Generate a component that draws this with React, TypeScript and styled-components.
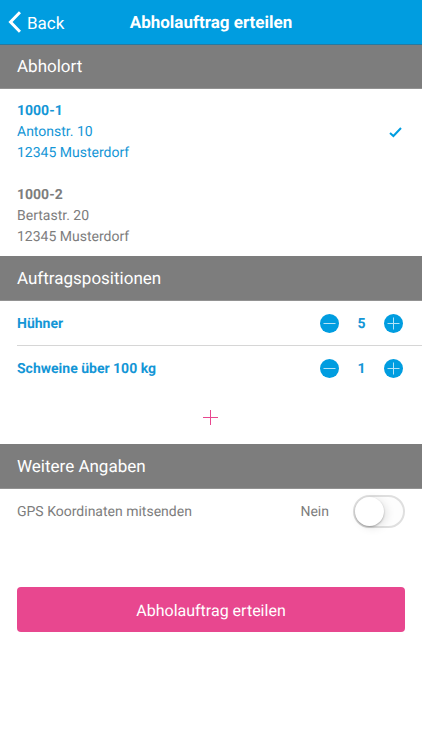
import React, { useState } from "react";
import styled, { createGlobalStyle } from "styled-components";

const blue = "#009de0";
const textBlue = "#1496d6";
const grey = "#7d7d7d";
const pink = "#e8478f";

const GlobalStyle = createGlobalStyle`
  *, *::before, *::after { box-sizing: border-box; }
  body {
    margin: 0;
    background: #fff;
    color: ${grey};
    font-family: Roboto, "Liberation Sans", sans-serif;
    font-size: 14px;
    line-height: 21px;
    text-rendering: geometricPrecision;
  }
  button { font: inherit; border: 0; padding: 0; cursor: pointer; text-rendering: inherit; }
`;

const Header = styled.header`
  display: grid;
  grid-template-columns: 1fr auto 1fr;
  align-items: center;
  height: 45px;
  margin-bottom: -1px;
  padding: 0 8px;
  background: ${blue};
  border-bottom: 1px solid #2679a0;
  color: #fff;
  position: relative;
`;

const BackButton = styled.button`
  display: flex;
  align-items: center;
  gap: 6px;
  justify-self: start;
  background: none;
  color: #fff;
  font-size: 17px;
  span { padding-top: 4px; }
`;

const Title = styled.h1`
  margin: 0;
  padding-top: 2px;
  font-size: 17px;
  font-weight: 700;
`;

const SectionTitle = styled.h2`
  display: flex;
  align-items: center;
  height: 45px;
  margin: 0;
  padding: 2px 17px 0;
  background: ${grey};
  border-bottom: 1px solid #929292;
  color: #fff;
  font-size: 17px;
  font-weight: 400;
`;

const Locations = styled.div`
  display: grid;
  gap: 1px;
`;

const Location = styled.label<{ $selected: boolean }>`
  display: flex;
  align-items: center;
  justify-content: space-between;
  padding: 12px 17px 8px;
  color: ${(p) => (p.$selected ? textBlue : grey)};
  cursor: pointer;
  position: relative;
`;

const HiddenInput = styled.input`
  position: absolute;
  inset: 0;
  width: 100%;
  height: 100%;
  margin: 0;
  opacity: 0;
  cursor: pointer;
`;

const Address = styled.span`
  display: grid;
`;

const Tick = styled.svg`
  margin-right: 3px;
`;

const Positions = styled.ul`
  margin: 0;
  padding: 0 0 0 17px;
  list-style: none;
`;

const Position = styled.li`
  display: flex;
  align-items: center;
  justify-content: space-between;
  height: 44px;
  padding-right: 19px;
  color: ${textBlue};
  font-weight: 700;
  & + & {
    height: 45px;
    border-top: 1px solid #d6d6d6;
  }
`;

const PositionName = styled.span`
  padding-top: 2px;
`;

const Count = styled.output`
  padding-top: 2px;
`;

const Stepper = styled.div`
  display: grid;
  grid-template-columns: 19px 45px 19px;
  align-items: center;
  text-align: center;
`;

const RoundButton = styled.button`
  display: grid;
  place-items: center;
  width: 19px;
  height: 19px;
  border-radius: 50%;
  background: ${blue};
`;

const AddButton = styled.button`
  display: grid;
  place-items: center;
  width: 100%;
  height: 54px;
  background: none;
`;

const OptionRow = styled.div`
  display: flex;
  align-items: center;
  height: 45px;
  padding: 0 17px;
`;

const OptionLabel = styled.label`
  flex: 1;
  padding-top: 2px;
`;

const OptionValue = styled.span`
  padding-top: 2px;
`;

const Switch = styled.span`
  position: relative;
  display: block;
  width: 52px;
  height: 33px;
  margin-left: 24px;
`;

const Track = styled.span<{ $on: boolean }>`
  display: flex;
  justify-content: ${(p) => (p.$on ? "flex-end" : "flex-start")};
  height: 100%;
  border: 2px solid ${(p) => (p.$on ? blue : "#dfdfdf")};
  border-radius: 17px;
  background: ${(p) => (p.$on ? blue : "#fdfdfd")};
`;

const Knob = styled.span`
  width: 29px;
  height: 29px;
  border-radius: 50%;
  background: #fff;
  box-shadow: 0 1px 2px rgba(0, 0, 0, 0.3), 3px 2px 8px rgba(0, 0, 0, 0.1);
`;

const Footer = styled.div`
  padding: 53px 17px 17px;
`;

const SubmitButton = styled.button`
  width: 100%;
  height: 45px;
  padding-top: 1px;
  border-radius: 4px;
  background: ${pink};
  color: #fff;
  font-size: 16px;
`;

const locations = [
  { id: "1000-1", street: "Antonstr. 10", city: "12345 Musterdorf" },
  { id: "1000-2", street: "Bertastr. 20", city: "12345 Musterdorf" },
];

export default function App() {
  const [selected, setSelected] = useState("1000-1");
  const [gps, setGps] = useState(false);
  const [positions, setPositions] = useState([
    { name: "Hühner", count: 5 },
    { name: "Schweine über 100 kg", count: 1 },
  ]);

  const change = (index: number, by: number) =>
    setPositions((list) =>
      list.map((p, i) => (i === index ? { ...p, count: Math.max(0, p.count + by) } : p))
    );

  return (
    <>
      <GlobalStyle />
      <Header>
        <BackButton type="button">
          <svg width="13" height="22" viewBox="0 0 13 22" fill="none" stroke="#fff" strokeWidth="3" aria-hidden="true">
            <path d="M12 1.2 2.5 11 12 20.8" />
          </svg>
          <span>Back</span>
        </BackButton>
        <Title>Abholauftrag erteilen</Title>
      </Header>
      <main>
        <SectionTitle>Abholort</SectionTitle>
        <Locations role="radiogroup" aria-label="Abholort">
          {locations.map((l) => (
            <Location key={l.id} $selected={l.id === selected}>
              <HiddenInput
                type="radio"
                name="location"
                checked={l.id === selected}
                onChange={() => setSelected(l.id)}
              />
              <Address>
                <strong>{l.id}</strong>
                <span>{l.street}</span>
                <span>{l.city}</span>
              </Address>
              {l.id === selected && (
                <Tick width="13" height="11" viewBox="0 0 13 11" fill="none" stroke={blue} strokeWidth="2" aria-hidden="true">
                  <path d="M1 6 4.4 9 12 1" />
                </Tick>
              )}
            </Location>
          ))}
        </Locations>
        <SectionTitle>Auftragspositionen</SectionTitle>
        <Positions>
          {positions.map((p, i) => (
            <Position key={p.name}>
              <PositionName>{p.name}</PositionName>
              <Stepper>
                <RoundButton type="button" aria-label={`${p.name} verringern`} onClick={() => change(i, -1)}>
                  <svg width="13" height="13" viewBox="0 0 13 13" stroke="#b5e3f7" aria-hidden="true">
                    <path d="M.5 6.5h12" />
                  </svg>
                </RoundButton>
                <Count>{p.count}</Count>
                <RoundButton type="button" aria-label={`${p.name} erhöhen`} onClick={() => change(i, 1)}>
                  <svg width="13" height="13" viewBox="0 0 13 13" stroke="#b5e3f7" aria-hidden="true">
                    <path d="M.5 6.5h12M6.5.5v12" />
                  </svg>
                </RoundButton>
              </Stepper>
            </Position>
          ))}
        </Positions>
        <AddButton type="button" aria-label="Position hinzufügen">
          <svg width="16" height="16" viewBox="0 0 16 16" fill="none" stroke={pink} strokeWidth="1" aria-hidden="true">
            <path d="M0 8.5h15M7.5 1v15" />
          </svg>
        </AddButton>
        <SectionTitle>Weitere Angaben</SectionTitle>
        <OptionRow>
          <OptionLabel htmlFor="gps">GPS Koordinaten mitsenden</OptionLabel>
          <OptionValue>{gps ? "Ja" : "Nein"}</OptionValue>
          <Switch>
            <Track $on={gps}>
              <Knob />
            </Track>
            <HiddenInput
              id="gps"
              type="checkbox"
              role="switch"
              checked={gps}
              onChange={(e) => setGps(e.target.checked)}
            />
          </Switch>
        </OptionRow>
        <Footer>
          <SubmitButton type="button">Abholauftrag erteilen</SubmitButton>
        </Footer>
      </main>
    </>
  );
}
